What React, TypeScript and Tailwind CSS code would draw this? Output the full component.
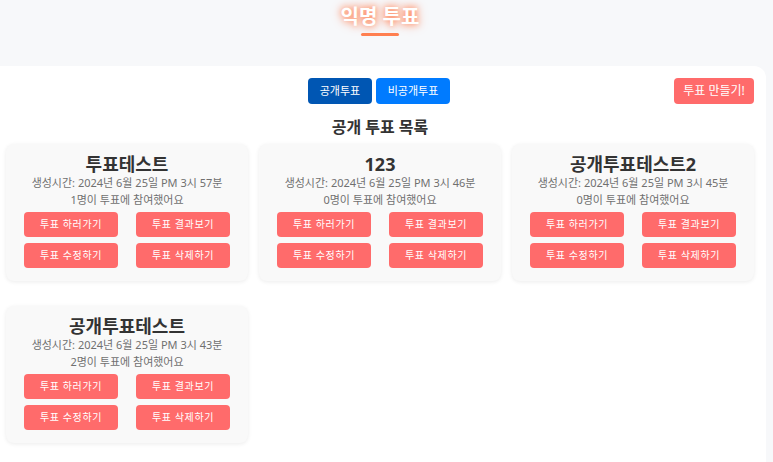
const polls = [
  { title: "투표테스트", time: "2024년 6월 25일 PM 3시 57분", count: 1 },
  { title: "123", time: "2024년 6월 25일 PM 3시 46분", count: 0 },
  { title: "공개투표테스트2", time: "2024년 6월 25일 PM 3시 45분", count: 0 },
  { title: "공개투표테스트", time: "2024년 6월 25일 PM 3시 43분", count: 2 },
];

const actions = ["투표 하러가기", "투표 결과보기", "투표 수정하기", "투표 삭제하기"];

function PollCard({ title, time, count }: { title: string; time: string; count: number }) {
  return (
    <div className="w-[242px] h-[137px] bg-[#f9f9f9] rounded-lg shadow-[0_1px_4px_rgba(0,0,0,0.08)] flex flex-col items-center pt-[9px]">
      <h3 className="text-[18px] leading-[22px] font-bold text-[#333]">{title}</h3>
      <p className="text-[11px] leading-[17px] text-[#707070] -mt-[1px]">생성시간: {time}</p>
      <p className="text-[11px] leading-[17px] text-[#707070]">{count}명이 투표에 참여했어요</p>
      <div className="grid grid-cols-2 gap-x-[18px] gap-y-[6px] mt-[4px]">
        {actions.map((a) => (
          <button
            key={a}
            className="w-[94px] h-[25px] bg-[#ff6b6b] text-white text-[10px] tracking-[0.6px] rounded"
          >
            {a}
          </button>
        ))}
      </div>
    </div>
  );
}

export default function App() {
  return (
    <div
      className="min-h-[462px] bg-[#f7f8fa] overflow-hidden"
      style={{ fontFamily: '"Noto Sans", "Noto Sans CJK KR", sans-serif' }}
    >
      <header className="h-[66px] w-[766px] flex flex-col items-center pt-[3px] pl-[6px] pr-3">
        <h1 className="text-[20px] leading-[28px] font-bold text-white [text-shadow:0_0_6px_#ff7f50,0_0_12px_#ff9f80]">
          익명 투표
        </h1>
        <div className="w-[38px] h-[3px] bg-[#ff7f50] rounded-full mt-[2px]" />
      </header>

      <main className="w-[766px] min-h-[396px] bg-white rounded-tr-xl pl-[6px] pr-3 pt-3">
        <div className="relative flex justify-center gap-1 pr-[2px]">
          <button className="w-[64px] h-[26px] bg-[#0056b3] text-white text-[11px] rounded">공개투표</button>
          <button className="w-[74px] h-[26px] bg-[#007bff] text-white text-[11px] rounded">비공개투표</button>
          <button className="absolute right-0 top-0 w-[80px] h-[26px] bg-[#ff6b6b] text-white text-[12px] rounded">
            투표 만들기!
          </button>
        </div>
        <h2 className="text-center text-[16px] leading-[24px] font-bold text-[#333] mt-[11px]">공개 투표 목록</h2>
        <div className="flex flex-wrap gap-x-[11px] gap-y-[25px] mt-[5px]">
          {polls.map((p) => (
            <PollCard key={p.title} {...p} />
          ))}
        </div>
      </main>
    </div>
  );
}
